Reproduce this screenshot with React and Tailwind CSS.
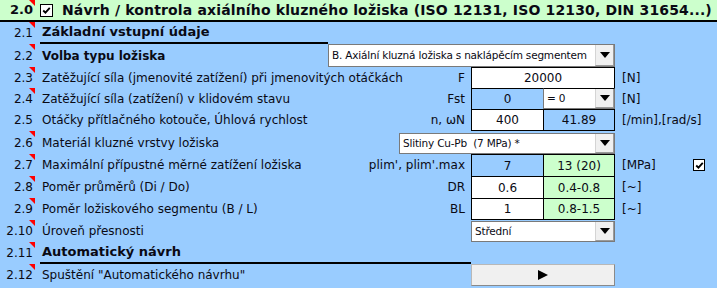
import React from 'react'

const Mark = () => (
  <span className="absolute right-0 top-0 w-0 h-0 border-l-[6px] border-l-transparent border-t-[6px] border-t-[#ff0000]" />
)

const Check = ({ size = 'w-[13px] h-[13px]' }) => (
  <span className={`${size} shrink-0 bg-white border border-black flex items-center justify-center`}>
    <svg viewBox="0 0 11 11" className="w-[9px] h-[9px]">
      <path d="M1.5 5.5 L4.2 8.2 L9.5 2.2" fill="none" stroke="black" strokeWidth="2.2" />
    </svg>
  </span>
)

const Arrow = () => (
  <span className="w-[19px] h-full bg-[#f0f0f0] border-l border-[#d4d4d4] border-b border-r border-b-[#9a9a9a] border-r-[#9a9a9a] flex items-center justify-center">
    <svg viewBox="0 0 10 6" className="w-[10px] h-[6px]">
      <path d="M0 0 H10 L5 6 Z" fill="black" />
    </svg>
  </span>
)

const Combo = ({ text, className }) => (
  <div className={`bg-white border border-[#7a7a7a] flex items-stretch ${className}`}>
    <span className="flex-1 flex items-center pl-[3px] text-[10.5px] tracking-[-0.2px] whitespace-pre overflow-hidden">{text}</span>
    <Arrow />
  </div>
)

const Cell = ({ children, bg = 'bg-white', className = '' }) => (
  <div className={`w-[72px] flex items-center justify-center border-l border-t border-black ${bg} ${className}`}>
    {children}
  </div>
)

const Row = ({ num, mark = true, h = 'h-[22px]', children, right }) => (
  <div className={`flex w-[717px] ${h}`}>
    <div className="relative w-[35px] shrink-0 flex items-center justify-end pr-[2px]">
      {mark && <Mark />}
      <span>{num}</span>
    </div>
    <div className="w-[580px] shrink-0 flex">{children}</div>
    <div className="w-[102px] shrink-0 flex items-center pl-[7px] whitespace-nowrap">{right}</div>
  </div>
)

const Label = ({ text, sym, bold }) => (
  <div className="flex-1 flex items-center justify-between pl-[7px] pr-[6px] whitespace-nowrap">
    <span className={bold ? 'font-bold' : ''}>{text}</span>
    {sym && <span>{sym}</span>}
  </div>
)

const App = () => {
  return (
    <div className="w-[717px] h-[288px] bg-[#99ccff] text-[12px] text-[#0a0a14] font-['DejaVu_Sans',sans-serif] overflow-hidden">
      {/* header */}
      <div className="flex items-center h-[22px] bg-[#ccffcc] border-b-2 border-black font-bold text-[13px]">
        <div className="relative w-[35px] h-full shrink-0 flex items-center justify-end pr-[2px]">
          <Mark />
          <span>2.0</span>
        </div>
        <div className="ml-[5px]"><Check /></div>
        <span className="ml-[9px] whitespace-nowrap text-[14px] tracking-[0.15px]">Návrh / kontrola axiálního kluzného ložiska (ISO 12131, ISO 12130, DIN 31654...)</span>
      </div>

      <Row num="2.1">
        <div className="flex">
          <div className="ml-[5px] w-[288px] h-full border-b-2 border-black flex items-center pl-[2px] font-bold text-[13px] whitespace-nowrap">
            Základní vstupní údaje
          </div>
        </div>
      </Row>

      <Row num="2.2" h="h-[23px]">
        <Label text="Volba typu ložiska" bold />
        <Combo text="B. Axiální kluzná ložiska s naklápěcím segmentem" className="w-[287px] h-[23px]" />
      </Row>

      <Row num="2.3" h="h-[21px]" right="[N]">
        <Label text="Zatěžující síla (jmenovité zatížení) při jmenovitých otáčkách" sym="F" />
        <div className="w-[144px] flex items-center justify-center bg-white border-l border-t border-r border-black">20000</div>
      </Row>

      <Row num="2.4" h="h-[21px]" right="[N]">
        <Label text="Zatěžující síla (zatížení) v klidovém stavu" sym="Fst" />
        <Cell bg="bg-[#99ccff]">0</Cell>
        <Combo text="= 0" className="w-[72px] h-[21px] border-t-black" />
      </Row>

      <Row num="2.5" mark={false} right="[/min],[rad/s]">
        <Label text="Otáčky přítlačného kotouče, Úhlová rychlost" sym="n, ωN" />
        <Cell className="border-b">400</Cell>
        <Cell bg="bg-[#99ccff]" className="border-b border-r">41.89</Cell>
      </Row>

      <Row num="2.6" h="h-[23px]">
        <Label text="Materiál kluzné vrstvy ložiska" />
        <div className="pt-[2px]">
          <Combo text="Slitiny Cu-Pb  (7 MPa) *" className="w-[216px] h-[21px]" />
        </div>
      </Row>

      <Row
        num="2.7"
        right={
          <>
            <span className="w-[71px] shrink-0">[MPa]</span>
            <Check size="w-[12px] h-[12px]" />
          </>
        }
      >
        <Label text="Maximální přípustné měrné zatížení ložiska" sym="plim', plim'.max" />
        <Cell bg="bg-[#99ccff]">7</Cell>
        <Cell bg="bg-[#ccffcc]" className="border-r">13 (20)</Cell>
      </Row>

      <Row num="2.8" right="[~]">
        <Label text="Poměr průměrů (Di / Do)" sym="DR" />
        <Cell>0.6</Cell>
        <Cell bg="bg-[#ccffcc]" className="border-r">0.4-0.8</Cell>
      </Row>

      <Row num="2.9" right="[~]">
        <Label text="Poměr ložiskového segmentu (B / L)" sym="BL" />
        <Cell className="border-b">1</Cell>
        <Cell bg="bg-[#ccffcc]" className="border-r border-b">0.8-1.5</Cell>
      </Row>

      <Row num="2.10">
        <Label text="Úroveň přesnosti" />
        <div className="pt-[1px]">
          <Combo text="Střední" className="w-[144px] h-[21px]" />
        </div>
      </Row>

      <Row num="2.11">
        <div className="w-[436px] flex">
          <div className="ml-[5px] flex-1 h-full border-b-2 border-black flex items-center pl-[2px] font-bold text-[13px] whitespace-nowrap">
            Automatický návrh
          </div>
        </div>
      </Row>

      <Row num="2.12">
        <Label text={'Spuštění "Automatického návrhu"'} />
        <button className="w-[144px] h-[22px] bg-[#f0f0f0] border border-[#b8b8b8] border-b-[#8a8a8a] border-r-[#8a8a8a] flex items-center justify-center">
          <svg viewBox="0 0 10 10" className="w-[10px] h-[10px]">
            <path d="M0 0 L10 5 L0 10 Z" fill="black" />
          </svg>
        </button>
      </Row>
    </div>
  )
}

export default App
